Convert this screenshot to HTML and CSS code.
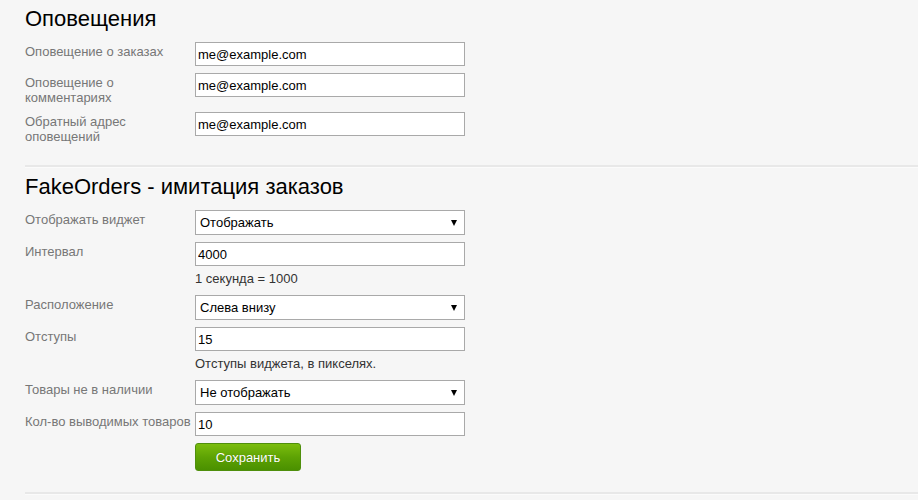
FILE: index.html
```html
<!DOCTYPE html>
<html lang="ru">
<head>
<meta charset="utf-8">
<title>Настройки</title>
<link rel="stylesheet" href="styles.css">
</head>
<body>
<div class="page">
  <section class="section">
    <h2 class="title">Оповещения</h2>
    <div class="row">
      <label class="label">Оповещение о заказах</label>
      <div class="field"><input class="input" type="text" value="me@example.com"></div>
    </div>
    <div class="row">
      <label class="label">Оповещение о комментариях</label>
      <div class="field"><input class="input" type="text" value="me@example.com"></div>
    </div>
    <div class="row">
      <label class="label">Обратный адрес оповещений</label>
      <div class="field"><input class="input" type="text" value="me@example.com"></div>
    </div>
  </section>
  <div class="sep"></div>
  <section class="section">
    <h2 class="title">FakeOrders - имитация заказов</h2>
    <div class="row">
      <label class="label">Отображать виджет</label>
      <div class="field"><span class="select-wrap"><select class="select"><option>Отображать</option><option>Не отображать</option></select></span></div>
    </div>
    <div class="row">
      <label class="label">Интервал</label>
      <div class="field"><input class="input" type="text" value="4000"><div class="hint">1 секунда = 1000</div></div>
    </div>
    <div class="row">
      <label class="label">Расположение</label>
      <div class="field"><span class="select-wrap"><select class="select"><option>Слева внизу</option></select></span></div>
    </div>
    <div class="row">
      <label class="label">Отступы</label>
      <div class="field"><input class="input" type="text" value="15"><div class="hint">Отступы виджета, в пикселях.</div></div>
    </div>
    <div class="row">
      <label class="label">Товары не в наличии</label>
      <div class="field"><span class="select-wrap"><select class="select"><option>Не отображать</option><option>Отображать</option></select></span></div>
    </div>
    <div class="row">
      <label class="label">Кол-во выводимых товаров</label>
      <div class="field"><input class="input" type="text" value="10"></div>
    </div>
    <div class="row">
      <span class="label"></span>
      <div class="field"><button class="btn" type="button">Сохранить</button></div>
    </div>
  </section>
  <div class="sep"></div>
</div>
</body>
</html>
```
FILE: styles.css
```css
html, body {
  margin: 0;
  padding: 0;
  background: #f6f6f6;
}
body {
  font-family: "Liberation Sans", Arial, sans-serif;
  font-size: 13px;
  color: #000;
}
.page {
  padding-left: 25px;
}
.section {
  padding-bottom: 20px;
}
.title {
  font-size: 22px;
  font-weight: normal;
  line-height: 26px;
  margin: 6px 0 10px;
  color: #000;
}
.row {
  display: flex;
  align-items: flex-start;
  margin-bottom: 7px;
}
.row:last-child {
  margin-bottom: 0;
}
.label {
  width: 170px;
  flex: 0 0 170px;
  padding-top: 2px;
  line-height: 15px;
  color: #777;
  font-size: 13px;
}
.field {
  width: 270px;
}
.input {
  box-sizing: border-box;
  display: block;
  width: 270px;
  height: 24px;
  margin: 0;
  padding: 0 2px;
  border: 1px solid #a9a9a9;
  background: #fff;
  font-family: "Liberation Sans", Arial, sans-serif;
  font-size: 13px;
  color: #000;
  outline: none;
}
.select-wrap {
  position: relative;
  display: block;
  width: 270px;
}
.select-wrap::after {
  content: "";
  position: absolute;
  right: 8px;
  top: 10px;
  width: 0;
  height: 0;
  border-left: 3px solid transparent;
  border-right: 3px solid transparent;
  border-top: 6px solid #000;
  pointer-events: none;
}
.select {
  box-sizing: border-box;
  display: block;
  width: 270px;
  height: 25px;
  margin: 0;
  padding: 0 4px;
  border: 1px solid #a9a9a9;
  border-radius: 0;
  background: #fff;
  font-family: "Liberation Sans", Arial, sans-serif;
  font-size: 13px;
  color: #000;
  -webkit-appearance: none;
  appearance: none;
  outline: none;
}
.hint {
  margin-top: 4px;
  line-height: 18px;
  color: #333;
}
.btn {
  box-sizing: border-box;
  width: 106px;
  height: 28px;
  margin: 0;
  padding: 0;
  border: 1px solid #4f8f0c;
  border-radius: 3px;
  background: linear-gradient(to bottom, #7bbd0d 0%, #5ea304 50%, #4a9000 100%);
  color: #fff;
  font-family: "Liberation Sans", Arial, sans-serif;
  font-size: 13px;
  text-shadow: 0 0 1px rgba(0, 0, 0, 0.25);
  cursor: pointer;
}
.sep {
  margin-top: 1px;
  height: 2px;
  background: #e8e8e8;
  border-bottom: 1px solid #fbfbfb;
}
```
